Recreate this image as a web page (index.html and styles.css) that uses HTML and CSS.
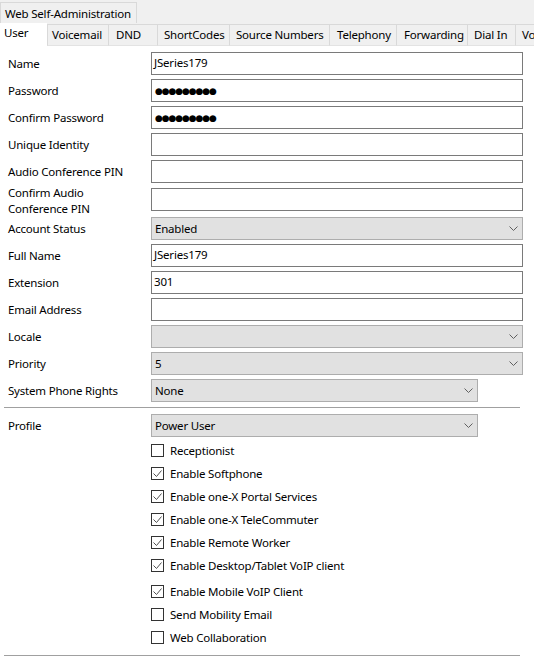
FILE: index.html
```html
<!DOCTYPE html>
<html>
<head>
<meta charset="utf-8">
<link rel="stylesheet" href="styles.css">
</head>
<body>
<div class="strip">
  <div class="apptab">Web Self-Administration</div>
  <div class="tabs">
    <div class="tab active">User</div>
    <div class="tab">Voicemail</div>
    <div class="tab">DND</div>
    <div class="tab">ShortCodes</div>
    <div class="tab">Source Numbers</div>
    <div class="tab">Telephony</div>
    <div class="tab">Forwarding</div>
    <div class="tab">Dial In</div>
    <div class="tab">Voicemail</div>
  </div>
</div>
<div class="form">
  <div class="row"><span class="lbl">Name</span><div class="input">JSeries179</div></div>
  <div class="row"><span class="lbl">Password</span><div class="input"><span class="dots">●●●●●●●●●</span></div></div>
  <div class="row"><span class="lbl">Confirm Password</span><div class="input"><span class="dots">●●●●●●●●●</span></div></div>
  <div class="row"><span class="lbl">Unique Identity</span><div class="input"></div></div>
  <div class="row"><span class="lbl">Audio Conference PIN</span><div class="input"></div></div>
  <div class="row tall"><span class="lbl">Confirm Audio<br>Conference PIN</span><div class="input"></div></div>
  <div class="row"><span class="lbl">Account Status</span><div class="select"><span>Enabled</span><svg class="chev" width="9" height="5" viewBox="0 0 9 5"><path d="M0.5 0.5 L4.5 4.5 L8.5 0.5" fill="none" stroke="#606060" stroke-width="1"/></svg></div></div>
  <div class="row"><span class="lbl">Full Name</span><div class="input">JSeries179</div></div>
  <div class="row"><span class="lbl">Extension</span><div class="input">301</div></div>
  <div class="row"><span class="lbl">Email Address</span><div class="input"></div></div>
  <div class="row"><span class="lbl">Locale</span><div class="select"><span></span><svg class="chev" width="9" height="5" viewBox="0 0 9 5"><path d="M0.5 0.5 L4.5 4.5 L8.5 0.5" fill="none" stroke="#606060" stroke-width="1"/></svg></div></div>
  <div class="row"><span class="lbl">Priority</span><div class="select"><span>5</span><svg class="chev" width="9" height="5" viewBox="0 0 9 5"><path d="M0.5 0.5 L4.5 4.5 L8.5 0.5" fill="none" stroke="#606060" stroke-width="1"/></svg></div></div>
  <div class="row short"><span class="lbl">System Phone Rights</span><div class="select"><span>None</span><svg class="chev" width="9" height="5" viewBox="0 0 9 5"><path d="M0.5 0.5 L4.5 4.5 L8.5 0.5" fill="none" stroke="#606060" stroke-width="1"/></svg></div></div>
  <div class="sep first"></div>
  <div class="row short profile"><span class="lbl">Profile</span><div class="select"><span>Power User</span><svg class="chev" width="9" height="5" viewBox="0 0 9 5"><path d="M0.5 0.5 L4.5 4.5 L8.5 0.5" fill="none" stroke="#606060" stroke-width="1"/></svg></div></div>
  <div class="checks">
    <div class="cb"><span class="box"></span>Receptionist</div>
    <div class="cb"><span class="box on"><svg width="11" height="11" viewBox="0 0 11 11"><path d="M1.5 5.5 L4.5 8.5 L9.5 2.5" fill="none" stroke="#505050" stroke-width="1"/></svg></span>Enable Softphone</div>
    <div class="cb"><span class="box on"><svg width="11" height="11" viewBox="0 0 11 11"><path d="M1.5 5.5 L4.5 8.5 L9.5 2.5" fill="none" stroke="#505050" stroke-width="1"/></svg></span>Enable one-X Portal Services</div>
    <div class="cb"><span class="box on"><svg width="11" height="11" viewBox="0 0 11 11"><path d="M1.5 5.5 L4.5 8.5 L9.5 2.5" fill="none" stroke="#505050" stroke-width="1"/></svg></span>Enable one-X TeleCommuter</div>
    <div class="cb"><span class="box on"><svg width="11" height="11" viewBox="0 0 11 11"><path d="M1.5 5.5 L4.5 8.5 L9.5 2.5" fill="none" stroke="#505050" stroke-width="1"/></svg></span>Enable Remote Worker</div>
    <div class="cb"><span class="box on"><svg width="11" height="11" viewBox="0 0 11 11"><path d="M1.5 5.5 L4.5 8.5 L9.5 2.5" fill="none" stroke="#505050" stroke-width="1"/></svg></span>Enable Desktop/Tablet VoIP client</div>
    <div class="cb gap"><span class="box on"><svg width="11" height="11" viewBox="0 0 11 11"><path d="M1.5 5.5 L4.5 8.5 L9.5 2.5" fill="none" stroke="#505050" stroke-width="1"/></svg></span>Enable Mobile VoIP Client</div>
    <div class="cb"><span class="box"></span>Send Mobility Email</div>
    <div class="cb"><span class="box"></span>Web Collaboration</div>
  </div>
  <div class="sep last"></div>
</div>
</body>
</html>
```
FILE: styles.css
```css
html, body {
  margin: 0;
  padding: 0;
  background: #ffffff;
  overflow: hidden;
}
body {
  font-family: "Noto Sans", "Open Sans", sans-serif;
  font-size: 11.5px;
  letter-spacing: -0.2px;
  color: #000;
  width: 534px;
  height: 664px;
}
.strip {
  background: #f0f0f0;
  padding-top: 2px;
  height: 44px;
  display: flex;
  flex-direction: column;
  white-space: nowrap;
}
.apptab {
  align-self: flex-start;
  border: 1px solid #d9d9d9;
  border-bottom: none;
  height: 20px;
  line-height: 21px;
  padding: 0 5px 0 4px;
}
.tabs {
  display: flex;
  align-items: flex-end;
  height: 24px;
  overflow: hidden;
}
.tab {
  flex: none;
  box-sizing: border-box;
  height: 22px;
  line-height: 20px;
  padding: 0 0 0 6px;
  border-top: 1px solid #d9d9d9;
  border-left: 1px solid #d9d9d9;
  border-bottom: 1px solid #e3e3e3;
  overflow: hidden;
}
.tab:nth-child(2) { width: 61px; padding-left: 4px; }
.tab:nth-child(3) { width: 49px; padding-left: 7px; }
.tab:nth-child(4) { width: 72px; }
.tab:nth-child(5) { width: 100px; }
.tab:nth-child(6) { width: 67px; padding-left: 7px; }
.tab:nth-child(7) { width: 71px; padding-left: 7px; }
.tab:nth-child(8) { width: 48px; }
.tab:nth-child(9) { width: 80px; }
.tab.active {
  width: 47px;
  background: #fff;
  height: 24px;
  line-height: 21px;
  padding: 0 0 0 4px;
  border: none;
}
.form {
  padding-top: 6px;
}
.row {
  display: grid;
  grid-template-columns: 151px 372px;
  grid-template-rows: 23px;
  height: 23px;
  margin-bottom: 4px;
  align-items: center;
}
.row.short {
  grid-template-columns: 151px 327px;
}
.row.tall {
  margin-top: 5px;
  height: 25px;
  grid-template-rows: 25px;
}
.row.tall .input {
  align-self: start;
}
.lbl {
  padding-left: 8px;
  line-height: 16px;
  white-space: nowrap;
}
.input {
  box-sizing: border-box;
  height: 23px;
  border: 1px solid #7a7a7a;
  background: #fff;
  padding-left: 2px;
  line-height: 20px;
}
.dots {
  font-family: "DejaVu Sans", sans-serif;
  font-size: 9px;
  letter-spacing: -1.1px;
  padding-left: 1px;
}
.select {
  box-sizing: border-box;
  height: 23px;
  border: 1px solid #adadad;
  background: #e1e1e1;
  padding: 0 4px 0 3px;
  line-height: 20px;
  display: flex;
  justify-content: space-between;
  align-items: center;
}
.chev {
  display: block;
}
.sep {
  height: 1px;
  background: #a0a0a0;
  margin: 0 14px 0 4px;
}
.sep.first {
  margin-top: 5px;
  margin-bottom: 6px;
}
.sep.last {
  margin-top: 6px;
}
.checks {
  padding-left: 151px;
  margin-top: -2px;
}
.cb {
  height: 23px;
  display: flex;
  align-items: center;
  white-space: nowrap;
}
.cb.gap {
  margin-top: 3px;
}
.box {
  box-sizing: border-box;
  width: 13px;
  height: 13px;
  border: 1px solid #333;
  background: #fff;
  margin-right: 6px;
  flex: none;
  display: flex;
  align-items: center;
  justify-content: center;
}
.box svg {
  display: block;
}
```
